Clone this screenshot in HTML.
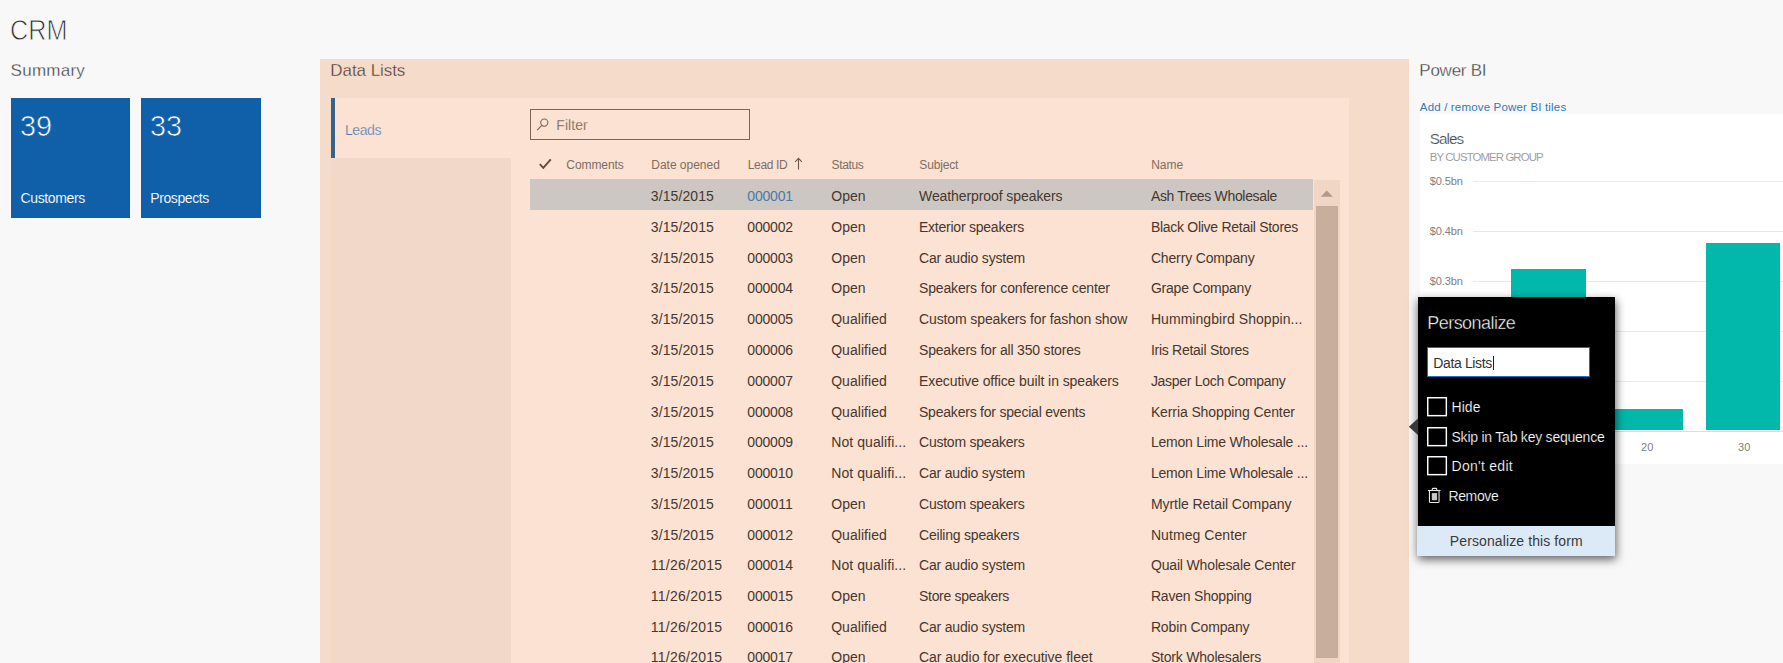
<!DOCTYPE html>
<html lang="en"><head><meta charset="utf-8"><title>CRM</title>
<style>
html,body{margin:0;padding:0}
body{width:1783px;height:663px;overflow:hidden;position:relative;background:#f8f8f8;font-family:"Liberation Sans",sans-serif}
body>div,body>span,body>svg{position:absolute;display:block}
body>span{white-space:nowrap;line-height:1}
</style></head>
<body>
<span style="left:10.20px;top:15.98px;font-size:29.2px;color:#2e2e2e;transform:scaleX(0.8647);transform-origin:0 0;-webkit-text-stroke:0.85px #f8f8f8;">CRM</span>
<span style="left:10.60px;top:61.61px;font-size:17px;color:#404040;letter-spacing:0.252px;-webkit-text-stroke:0.3px #f8f8f8;">Summary</span>
<div style="left:11px;top:98px;width:119.3px;height:120px;background:#0f60a9;"></div>
<div style="left:141px;top:98px;width:120px;height:120px;background:#0f60a9;"></div>
<span style="left:20.30px;top:110.63px;font-size:29.5px;color:#fff;transform:scaleX(0.9752);transform-origin:0 0;-webkit-text-stroke:0.65px #0f60a9;">39</span>
<span style="left:150.30px;top:110.63px;font-size:29.5px;color:#fff;transform:scaleX(0.9752);transform-origin:0 0;-webkit-text-stroke:0.65px #0f60a9;">33</span>
<span style="left:20.50px;top:191.05px;font-size:14px;color:#fff;letter-spacing:-0.354px;-webkit-text-stroke:0.12px #0f60a9;">Customers</span>
<span style="left:150.30px;top:191.05px;font-size:14px;color:#fff;letter-spacing:-0.417px;-webkit-text-stroke:0.12px #0f60a9;">Prospects</span>
<div style="left:320px;top:58.5px;width:1089px;height:610px;background:#f5dbca;"></div>
<div style="left:331px;top:98px;width:1018px;height:570px;background:#fbe2d3;"></div>
<div style="left:331px;top:158px;width:180px;height:510px;background:#f2d8c8;"></div>
<div style="left:331px;top:98px;width:4.3px;height:60px;background:#36628b;"></div>
<span style="left:330.30px;top:61.61px;font-size:17px;color:#4e3c32;letter-spacing:-0.059px;-webkit-text-stroke:0.3px #f5dbca;">Data Lists</span>
<span style="left:345.00px;top:122.55px;font-size:14px;color:#4a7bb0;letter-spacing:-0.429px;-webkit-text-stroke:0.25px #fbe2d3;">Leads</span>
<div style="left:530px;top:109.3px;width:220px;height:30.3px;box-sizing:border-box;border:1px solid #7b6458;"></div>
<svg style="left:536px;top:117px" width="14" height="15" viewBox="0 0 14 15"><circle cx="8.3" cy="5.6" r="3.6" fill="none" stroke="#7a665a" stroke-width="1.1"/><path d="M5.8 8.3 L1.2 13.2" stroke="#7a665a" stroke-width="1.1" fill="none"/></svg>
<span style="left:556.30px;top:118.45px;font-size:14px;color:#69574d;letter-spacing:0.065px;-webkit-text-stroke:0.25px #fbe2d3;">Filter</span>
<svg style="left:538px;top:157.4px" width="15" height="14" viewBox="0 0 15 14"><path d="M1.8 7.2 L5.3 10.8 L12.8 2.4" fill="none" stroke="#5e4b41" stroke-width="1.9"/></svg>
<span style="left:566.30px;top:158.74px;font-size:12px;color:#806d62;letter-spacing:-0.064px;">Comments</span>
<span style="left:651.30px;top:158.74px;font-size:12px;color:#806d62;letter-spacing:-0.021px;">Date opened</span>
<span style="left:747.80px;top:158.74px;font-size:12px;color:#806d62;letter-spacing:-0.361px;">Lead ID</span>
<svg style="left:793px;top:156.5px" width="11" height="14" viewBox="0 0 11 14"><path d="M5.5 1.4 V12.6 M2.2 4.8 L5.5 1.4 L8.8 4.8" fill="none" stroke="#6a584e" stroke-width="1.1"/></svg>
<span style="left:831.50px;top:158.74px;font-size:12px;color:#806d62;letter-spacing:-0.337px;">Status</span>
<span style="left:919.30px;top:158.74px;font-size:12px;color:#806d62;letter-spacing:-0.147px;">Subject</span>
<span style="left:1151.20px;top:158.74px;font-size:12px;color:#806d62;">Name</span>
<div style="left:530px;top:179.3px;width:783px;height:30.4px;background:#cdc7c3;"></div>
<div style="left:1314px;top:180px;width:25.6px;height:490px;background:#f1d6c5;"></div>
<div style="left:1315.7px;top:205.6px;width:22.3px;height:452.2px;background:#c8ae9d;"></div>
<svg style="left:1320px;top:189px" width="14" height="9" viewBox="0 0 14 9"><path d="M0.8 7.8 L6.8 1.4 L12.8 7.8 Z" fill="#b09a8c"/></svg>
<span style="left:650.80px;top:189.15px;font-size:14px;color:#47372e;letter-spacing:0.102px;">3/15/2015</span>
<span style="left:747.30px;top:189.15px;font-size:14px;color:#4a79aa;letter-spacing:-0.203px;">000001</span>
<span style="left:831.20px;top:189.15px;font-size:14px;color:#47372e;letter-spacing:0.063px;">Open</span>
<span style="left:919.00px;top:189.15px;font-size:14px;color:#47372e;letter-spacing:-0.084px;">Weatherproof speakers</span>
<span style="left:1150.90px;top:189.15px;font-size:14px;color:#47372e;letter-spacing:-0.326px;">Ash Trees Wholesale</span>
<span style="left:650.80px;top:220.15px;font-size:14px;color:#47372e;letter-spacing:0.102px;">3/15/2015</span>
<span style="left:747.30px;top:220.15px;font-size:14px;color:#47372e;letter-spacing:-0.203px;">000002</span>
<span style="left:831.20px;top:220.15px;font-size:14px;color:#47372e;letter-spacing:0.063px;">Open</span>
<span style="left:919.00px;top:220.15px;font-size:14px;color:#47372e;letter-spacing:-0.237px;">Exterior speakers</span>
<span style="left:1150.90px;top:220.15px;font-size:14px;color:#47372e;letter-spacing:-0.278px;">Black Olive Retail Stores</span>
<span style="left:650.80px;top:251.15px;font-size:14px;color:#47372e;letter-spacing:0.102px;">3/15/2015</span>
<span style="left:747.30px;top:251.15px;font-size:14px;color:#47372e;letter-spacing:-0.203px;">000003</span>
<span style="left:831.20px;top:251.15px;font-size:14px;color:#47372e;letter-spacing:0.063px;">Open</span>
<span style="left:919.00px;top:251.15px;font-size:14px;color:#47372e;letter-spacing:-0.177px;">Car audio system</span>
<span style="left:1150.90px;top:251.15px;font-size:14px;color:#47372e;letter-spacing:-0.151px;">Cherry Company</span>
<span style="left:650.80px;top:281.15px;font-size:14px;color:#47372e;letter-spacing:0.102px;">3/15/2015</span>
<span style="left:747.30px;top:281.15px;font-size:14px;color:#47372e;letter-spacing:-0.203px;">000004</span>
<span style="left:831.20px;top:281.15px;font-size:14px;color:#47372e;letter-spacing:0.063px;">Open</span>
<span style="left:919.00px;top:281.15px;font-size:14px;color:#47372e;letter-spacing:-0.151px;">Speakers for conference center</span>
<span style="left:1150.90px;top:281.15px;font-size:14px;color:#47372e;letter-spacing:-0.202px;">Grape Company</span>
<span style="left:650.80px;top:312.15px;font-size:14px;color:#47372e;letter-spacing:0.102px;">3/15/2015</span>
<span style="left:747.30px;top:312.15px;font-size:14px;color:#47372e;letter-spacing:-0.203px;">000005</span>
<span style="left:831.20px;top:312.15px;font-size:14px;color:#47372e;letter-spacing:0.038px;">Qualified</span>
<span style="left:919.00px;top:312.15px;font-size:14px;color:#47372e;letter-spacing:-0.112px;">Custom speakers for fashon show</span>
<span style="left:1150.90px;top:312.15px;font-size:14px;color:#47372e;letter-spacing:0.060px;">Hummingbird Shoppin...</span>
<span style="left:650.80px;top:343.15px;font-size:14px;color:#47372e;letter-spacing:0.102px;">3/15/2015</span>
<span style="left:747.30px;top:343.15px;font-size:14px;color:#47372e;letter-spacing:-0.203px;">000006</span>
<span style="left:831.20px;top:343.15px;font-size:14px;color:#47372e;letter-spacing:0.038px;">Qualified</span>
<span style="left:919.00px;top:343.15px;font-size:14px;color:#47372e;letter-spacing:-0.183px;">Speakers for all 350 stores</span>
<span style="left:1150.90px;top:343.15px;font-size:14px;color:#47372e;letter-spacing:-0.267px;">Iris Retail Stores</span>
<span style="left:650.80px;top:374.15px;font-size:14px;color:#47372e;letter-spacing:0.102px;">3/15/2015</span>
<span style="left:747.30px;top:374.15px;font-size:14px;color:#47372e;letter-spacing:-0.203px;">000007</span>
<span style="left:831.20px;top:374.15px;font-size:14px;color:#47372e;letter-spacing:0.038px;">Qualified</span>
<span style="left:919.00px;top:374.15px;font-size:14px;color:#47372e;letter-spacing:-0.093px;">Executive office built in speakers</span>
<span style="left:1150.90px;top:374.15px;font-size:14px;color:#47372e;letter-spacing:-0.288px;">Jasper Loch Company</span>
<span style="left:650.80px;top:405.15px;font-size:14px;color:#47372e;letter-spacing:0.102px;">3/15/2015</span>
<span style="left:747.30px;top:405.15px;font-size:14px;color:#47372e;letter-spacing:-0.203px;">000008</span>
<span style="left:831.20px;top:405.15px;font-size:14px;color:#47372e;letter-spacing:0.038px;">Qualified</span>
<span style="left:919.00px;top:405.15px;font-size:14px;color:#47372e;letter-spacing:-0.214px;">Speakers for special events</span>
<span style="left:1150.90px;top:405.15px;font-size:14px;color:#47372e;letter-spacing:-0.105px;">Kerria Shopping Center</span>
<span style="left:650.80px;top:435.15px;font-size:14px;color:#47372e;letter-spacing:0.102px;">3/15/2015</span>
<span style="left:747.30px;top:435.15px;font-size:14px;color:#47372e;letter-spacing:-0.203px;">000009</span>
<span style="left:831.20px;top:435.15px;font-size:14px;color:#47372e;letter-spacing:0.084px;">Not qualifi...</span>
<span style="left:919.00px;top:435.15px;font-size:14px;color:#47372e;letter-spacing:-0.229px;">Custom speakers</span>
<span style="left:1150.90px;top:435.15px;font-size:14px;color:#47372e;letter-spacing:-0.202px;">Lemon Lime Wholesale ...</span>
<span style="left:650.80px;top:466.15px;font-size:14px;color:#47372e;letter-spacing:0.102px;">3/15/2015</span>
<span style="left:747.30px;top:466.15px;font-size:14px;color:#47372e;letter-spacing:-0.203px;">000010</span>
<span style="left:831.20px;top:466.15px;font-size:14px;color:#47372e;letter-spacing:0.084px;">Not qualifi...</span>
<span style="left:919.00px;top:466.15px;font-size:14px;color:#47372e;letter-spacing:-0.177px;">Car audio system</span>
<span style="left:1150.90px;top:466.15px;font-size:14px;color:#47372e;letter-spacing:-0.202px;">Lemon Lime Wholesale ...</span>
<span style="left:650.80px;top:497.15px;font-size:14px;color:#47372e;letter-spacing:0.102px;">3/15/2015</span>
<span style="left:747.30px;top:497.15px;font-size:14px;color:#47372e;letter-spacing:-0.030px;">000011</span>
<span style="left:831.20px;top:497.15px;font-size:14px;color:#47372e;letter-spacing:0.063px;">Open</span>
<span style="left:919.00px;top:497.15px;font-size:14px;color:#47372e;letter-spacing:-0.229px;">Custom speakers</span>
<span style="left:1150.90px;top:497.15px;font-size:14px;color:#47372e;letter-spacing:-0.053px;">Myrtle Retail Company</span>
<span style="left:650.80px;top:528.15px;font-size:14px;color:#47372e;letter-spacing:0.102px;">3/15/2015</span>
<span style="left:747.30px;top:528.15px;font-size:14px;color:#47372e;letter-spacing:-0.203px;">000012</span>
<span style="left:831.20px;top:528.15px;font-size:14px;color:#47372e;letter-spacing:0.038px;">Qualified</span>
<span style="left:919.00px;top:528.15px;font-size:14px;color:#47372e;letter-spacing:-0.206px;">Ceiling speakers</span>
<span style="left:1150.90px;top:528.15px;font-size:14px;color:#47372e;letter-spacing:0.074px;">Nutmeg Center</span>
<span style="left:650.80px;top:558.15px;font-size:14px;color:#47372e;letter-spacing:0.247px;">11/26/2015</span>
<span style="left:747.30px;top:558.15px;font-size:14px;color:#47372e;letter-spacing:-0.203px;">000014</span>
<span style="left:831.20px;top:558.15px;font-size:14px;color:#47372e;letter-spacing:0.084px;">Not qualifi...</span>
<span style="left:919.00px;top:558.15px;font-size:14px;color:#47372e;letter-spacing:-0.177px;">Car audio system</span>
<span style="left:1150.90px;top:558.15px;font-size:14px;color:#47372e;letter-spacing:-0.152px;">Quail Wholesale Center</span>
<span style="left:650.80px;top:589.15px;font-size:14px;color:#47372e;letter-spacing:0.247px;">11/26/2015</span>
<span style="left:747.30px;top:589.15px;font-size:14px;color:#47372e;letter-spacing:-0.203px;">000015</span>
<span style="left:831.20px;top:589.15px;font-size:14px;color:#47372e;letter-spacing:0.063px;">Open</span>
<span style="left:919.00px;top:589.15px;font-size:14px;color:#47372e;letter-spacing:-0.297px;">Store speakers</span>
<span style="left:1150.90px;top:589.15px;font-size:14px;color:#47372e;letter-spacing:-0.202px;">Raven Shopping</span>
<span style="left:650.80px;top:620.15px;font-size:14px;color:#47372e;letter-spacing:0.247px;">11/26/2015</span>
<span style="left:747.30px;top:620.15px;font-size:14px;color:#47372e;letter-spacing:-0.203px;">000016</span>
<span style="left:831.20px;top:620.15px;font-size:14px;color:#47372e;letter-spacing:0.038px;">Qualified</span>
<span style="left:919.00px;top:620.15px;font-size:14px;color:#47372e;letter-spacing:-0.177px;">Car audio system</span>
<span style="left:1150.90px;top:620.15px;font-size:14px;color:#47372e;letter-spacing:-0.138px;">Robin Company</span>
<span style="left:650.80px;top:650.15px;font-size:14px;color:#47372e;letter-spacing:0.247px;">11/26/2015</span>
<span style="left:747.30px;top:650.15px;font-size:14px;color:#47372e;letter-spacing:-0.203px;">000017</span>
<span style="left:831.20px;top:650.15px;font-size:14px;color:#47372e;letter-spacing:0.063px;">Open</span>
<span style="left:919.00px;top:650.15px;font-size:14px;color:#47372e;letter-spacing:-0.028px;">Car audio for executive fleet</span>
<span style="left:1150.90px;top:650.15px;font-size:14px;color:#47372e;letter-spacing:-0.206px;">Stork Wholesalers</span>
<span style="left:1419.30px;top:61.61px;font-size:17px;color:#404040;letter-spacing:-0.247px;-webkit-text-stroke:0.3px #f8f8f8;">Power BI</span>
<span style="left:1419.80px;top:101.67px;font-size:11.5px;color:#3278bd;letter-spacing:0.171px;">Add / remove Power BI tiles</span>
<div style="left:1420px;top:114px;width:370px;height:349.5px;background:#fff;"></div>
<span style="left:1429.80px;top:131.05px;font-size:15.3px;color:#4a4a4a;letter-spacing:-0.955px;-webkit-text-stroke:0.2px #fff;">Sales</span>
<span style="left:1429.80px;top:151.85px;font-size:11.4px;color:#a0a0a0;letter-spacing:-0.892px;">BY CUSTOMER GROUP</span>
<div style="left:1472.5px;top:180.8px;width:320px;height:1px;background:#e9e9e9;"></div>
<span style="left:1429.80px;top:175.79px;font-size:11px;color:#808080;letter-spacing:-0.108px;">$0.5bn</span>
<div style="left:1472.5px;top:230.8px;width:320px;height:1px;background:#e9e9e9;"></div>
<span style="left:1429.80px;top:225.79px;font-size:11px;color:#808080;letter-spacing:-0.108px;">$0.4bn</span>
<div style="left:1472.5px;top:280.8px;width:320px;height:1px;background:#e9e9e9;"></div>
<span style="left:1429.80px;top:275.79px;font-size:11px;color:#808080;letter-spacing:-0.108px;">$0.3bn</span>
<div style="left:1472.5px;top:330.8px;width:320px;height:1px;background:#e9e9e9;"></div>
<span style="left:1429.80px;top:325.79px;font-size:11px;color:#808080;letter-spacing:-0.108px;">$0.2bn</span>
<div style="left:1472.5px;top:380.8px;width:320px;height:1px;background:#e9e9e9;"></div>
<span style="left:1429.80px;top:375.79px;font-size:11px;color:#808080;letter-spacing:-0.108px;">$0.1bn</span>
<div style="left:1472.5px;top:430.8px;width:320px;height:1px;background:#dcdcdc;"></div>
<span style="left:1429.80px;top:425.79px;font-size:11px;color:#808080;letter-spacing:-0.108px;">$0.0bn</span>
<div style="left:1511px;top:269px;width:74.8px;height:161.5px;background:#01b8aa;"></div>
<div style="left:1608.5px;top:408.8px;width:74.5px;height:21.7px;background:#01b8aa;"></div>
<div style="left:1705.8px;top:243.3px;width:74.2px;height:187.2px;background:#01b8aa;"></div>
<span style="left:1641.00px;top:441.69px;font-size:11px;color:#808080;letter-spacing:0.132px;">20</span>
<span style="left:1738.00px;top:441.69px;font-size:11px;color:#808080;letter-spacing:0.132px;">30</span>
<div style="left:1417.6px;top:297.3px;width:197.4px;height:258.4px;background:#000;box-shadow:0.5px 3px 9px 0.5px rgba(0,0,0,.62);"></div>
<svg style="left:1408px;top:417px" width="11" height="20" viewBox="0 0 11 20"><path d="M10.2 1.2 L0.9 9.8 L10.2 18.3 Z" fill="#383838"/></svg>
<span style="left:1427.30px;top:314.16px;font-size:18px;color:#fff;letter-spacing:-0.551px;-webkit-text-stroke:0.4px #000;">Personalize</span>
<div style="left:1427px;top:347.3px;width:163px;height:30px;box-sizing:border-box;background:#fff;border:1.6px solid #1e6fc4;"></div>
<span style="left:1433.30px;top:355.75px;font-size:14px;color:#333;letter-spacing:-0.375px;">Data Lists</span>
<div style="left:1493.2px;top:355.5px;width:1px;height:14.5px;background:#222;"></div>
<svg style="left:1426px;top:396.2px" width="22" height="22" viewBox="0 0 22 22"><rect x="1.75" y="1.75" width="18.6" height="17.9" fill="none" stroke="#fff" stroke-width="1.45"/></svg>
<svg style="left:1426px;top:425.8px" width="22" height="22" viewBox="0 0 22 22"><rect x="1.75" y="1.75" width="18.6" height="17.9" fill="none" stroke="#fff" stroke-width="1.45"/></svg>
<svg style="left:1426px;top:455.1px" width="22" height="22" viewBox="0 0 22 22"><rect x="1.75" y="1.75" width="18.6" height="17.9" fill="none" stroke="#fff" stroke-width="1.45"/></svg>
<span style="left:1451.50px;top:399.85px;font-size:14px;color:#fff;letter-spacing:0.051px;-webkit-text-stroke:0.2px #000;">Hide</span>
<span style="left:1451.50px;top:430.05px;font-size:14px;color:#fff;letter-spacing:-0.230px;-webkit-text-stroke:0.2px #000;">Skip in Tab key sequence</span>
<span style="left:1451.50px;top:459.05px;font-size:14px;color:#fff;letter-spacing:0.279px;-webkit-text-stroke:0.2px #000;">Don't edit</span>
<svg style="left:1427px;top:487px" width="15" height="17" viewBox="0 0 15 17"><g fill="none" stroke="#e8e8e8" stroke-width="1.1"><path d="M2.45 3.6 V14.4 Q2.45 15.5 3.5 15.5 H11 Q12.05 15.5 12.05 14.4 V3.6"/><path d="M1 3.5 H13.5"/><path d="M5.3 3.2 V1.9 Q5.3 1.4 5.8 1.4 H9.2 Q9.7 1.4 9.7 1.9 V3.2"/></g><rect x="4.8" y="6.1" width="5.3" height="7.1" fill="#c2c2c2"/><path d="M6.2 6.1 V13.2 M8.1 6.1 V13.2" stroke="#e0e0e0" stroke-width="0.5"/></svg>
<span style="left:1448.40px;top:488.65px;font-size:14px;color:#fff;letter-spacing:-0.355px;-webkit-text-stroke:0.2px #000;">Remove</span>
<div style="left:1417.4px;top:526.3px;width:197.6px;height:29.3px;background:#dce9f7;"></div>
<span style="left:1449.80px;top:534.15px;font-size:14px;color:#3a3a3a;letter-spacing:0.109px;">Personalize this form</span>
</body></html>
